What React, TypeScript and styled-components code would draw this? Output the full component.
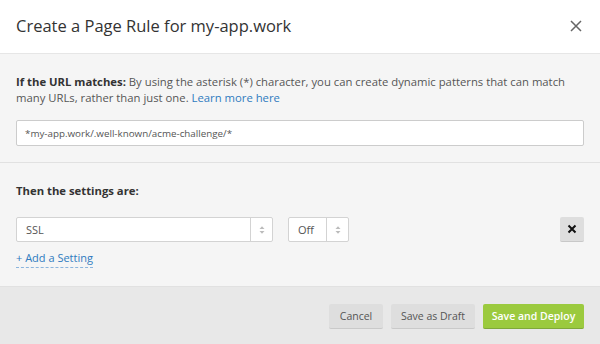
import styled, { createGlobalStyle } from 'styled-components'

const GlobalStyle = createGlobalStyle`
  html, body {
    margin: 0;
    padding: 0;
    background: #ffffff;
  }
  body {
    font-family: "Open Sans", "Noto Sans", sans-serif;
    color: #333333;
  }
  * {
    box-sizing: border-box;
  }
`

const Modal = styled.div`
  width: 600px;
  height: 344px;
  display: flex;
  flex-direction: column;
  background: #f5f5f5;
`

const Header = styled.div`
  height: 54px;
  flex: none;
  display: flex;
  align-items: center;
  justify-content: space-between;
  padding: 0 16px 2px 16px;
  background: #ffffff;
  border-bottom: 1px solid #e6e6e6;
`

const Title = styled.h2`
  margin: 0;
  font-size: 16.5px;
  font-weight: 400;
  color: #333333;
`

const CloseButton = styled.button`
  border: 0;
  background: none;
  padding: 0;
  margin-right: 1px;
  width: 14px;
  height: 14px;
  display: flex;
  align-items: center;
  justify-content: center;
  color: #666666;
  cursor: pointer;
`

const Section = styled.div<{ $top: number; $bottom: number }>`
  padding: ${p => p.$top}px 16px ${p => p.$bottom}px 16px;
  border-bottom: 1px solid #e1e1e1;
`

const Text = styled.p`
  margin: 0;
  font-size: 11.3px;
  line-height: 16px;
  color: #555555;

  strong {
    color: #333333;
    font-weight: 700;
  }
`

const Link = styled.a`
  color: #2f7bbf;
  text-decoration: none;
`

const UrlInput = styled.input`
  display: block;
  width: 100%;
  height: 26px;
  margin-top: 14px;
  padding: 0 8px;
  border: 1px solid #cccccc;
  border-radius: 2px;
  background: #ffffff;
  font-family: inherit;
  font-size: 9.8px;
  color: #555555;
  outline: none;
`

const SettingRow = styled.div`
  display: flex;
  align-items: center;
  margin-top: 18px;
`

const Select = styled.div<{ $width: number; $gap?: number }>`
  width: ${p => p.$width}px;
  height: 25px;
  margin-left: ${p => p.$gap ?? 0}px;
  display: flex;
  border: 1px solid #d3d3d3;
  border-radius: 2px;
  background: #ffffff;
`

const SelectValue = styled.span`
  flex: 1;
  display: flex;
  align-items: center;
  padding-left: 9px;
  font-size: 11px;
  color: #555555;
`

const SelectArrows = styled.span`
  width: 22px;
  flex: none;
  display: flex;
  align-items: center;
  justify-content: center;
  border-left: 1px solid #d3d3d3;
  color: #bbbbbb;
`

const RemoveButton = styled.button`
  margin-left: auto;
  width: 24px;
  height: 25px;
  padding: 0;
  display: flex;
  align-items: center;
  justify-content: center;
  border: 0;
  border-bottom: 1px solid #c8c8c8;
  border-radius: 2px;
  background: #dedede;
  color: #111111;
`

const AddSetting = styled.a`
  display: inline-block;
  margin-top: 8px;
  font-size: 11px;
  line-height: 16px;
  color: #2f7bbf;
  text-decoration: none;
  padding-bottom: 1px;
  border-bottom: 1px dashed #8cb5dd;
`

const Footer = styled.div`
  flex: 1;
  display: flex;
  justify-content: flex-end;
  align-items: flex-start;
  gap: 8px;
  padding: 17px 16px 0 16px;
  background: #e8e8e8;
`

const Button = styled.button<{ $primary?: boolean; $width: number }>`
  width: ${p => p.$width}px;
  height: 25px;
  padding: 0;
  border: 0;
  border-bottom: 1px solid ${p => (p.$primary ? '#7fa83a' : '#c9c9c9')};
  border-radius: 2px;
  background: ${p => (p.$primary ? '#9bca3e' : '#dedede')};
  color: ${p => (p.$primary ? '#ffffff' : '#555555')};
  font-family: inherit;
  font-size: 10.5px;
  font-weight: ${p => (p.$primary ? 600 : 400)};
  white-space: nowrap;
  cursor: pointer;
`

function Arrows() {
  return (
    <svg width="6" height="10" viewBox="0 0 6 10">
      <path d="M0.5 4 L3 1.2 L5.5 4 Z" fill="currentColor" />
      <path d="M0.5 6 L3 8.8 L5.5 6 Z" fill="currentColor" />
    </svg>
  )
}

export default function App() {
  return (
    <>
      <GlobalStyle />
      <Modal>
        <Header>
          <Title>Create a Page Rule for my-app.work</Title>
          <CloseButton aria-label="Close">
            <svg width="12" height="12" viewBox="0 0 12 12">
              <path d="M1 1 L11 11 M11 1 L1 11" stroke="currentColor" strokeWidth="1.5" />
            </svg>
          </CloseButton>
        </Header>

        <Section $top={20} $bottom={16}>
          <Text>
            <strong>If the URL matches:</strong> By using the asterisk (*) character, you can create dynamic patterns that can match many URLs, rather than just one. <Link href="#">Learn more here</Link>
          </Text>
          <UrlInput defaultValue="*my-app.work/.well-known/acme-challenge/*" />
        </Section>

        <Section $top={20} $bottom={18}>
          <Text>
            <strong>Then the settings are:</strong>
          </Text>
          <SettingRow>
            <Select $width={257}>
              <SelectValue>SSL</SelectValue>
              <SelectArrows>
                <Arrows />
              </SelectArrows>
            </Select>
            <Select $width={61} $gap={15}>
              <SelectValue>Off</SelectValue>
              <SelectArrows>
                <Arrows />
              </SelectArrows>
            </Select>
            <RemoveButton aria-label="Remove setting">
              <svg width="10" height="10" viewBox="0 0 10 10">
                <path d="M1.5 1.5 L8.5 8.5 M8.5 1.5 L1.5 8.5" stroke="currentColor" strokeWidth="2" />
              </svg>
            </RemoveButton>
          </SettingRow>
          <AddSetting href="#">+ Add a Setting</AddSetting>
        </Section>

        <Footer>
          <Button $width={54}>Cancel</Button>
          <Button $width={84}>Save as Draft</Button>
          <Button $primary $width={101}>Save and Deploy</Button>
        </Footer>
      </Modal>
    </>
  )
}
